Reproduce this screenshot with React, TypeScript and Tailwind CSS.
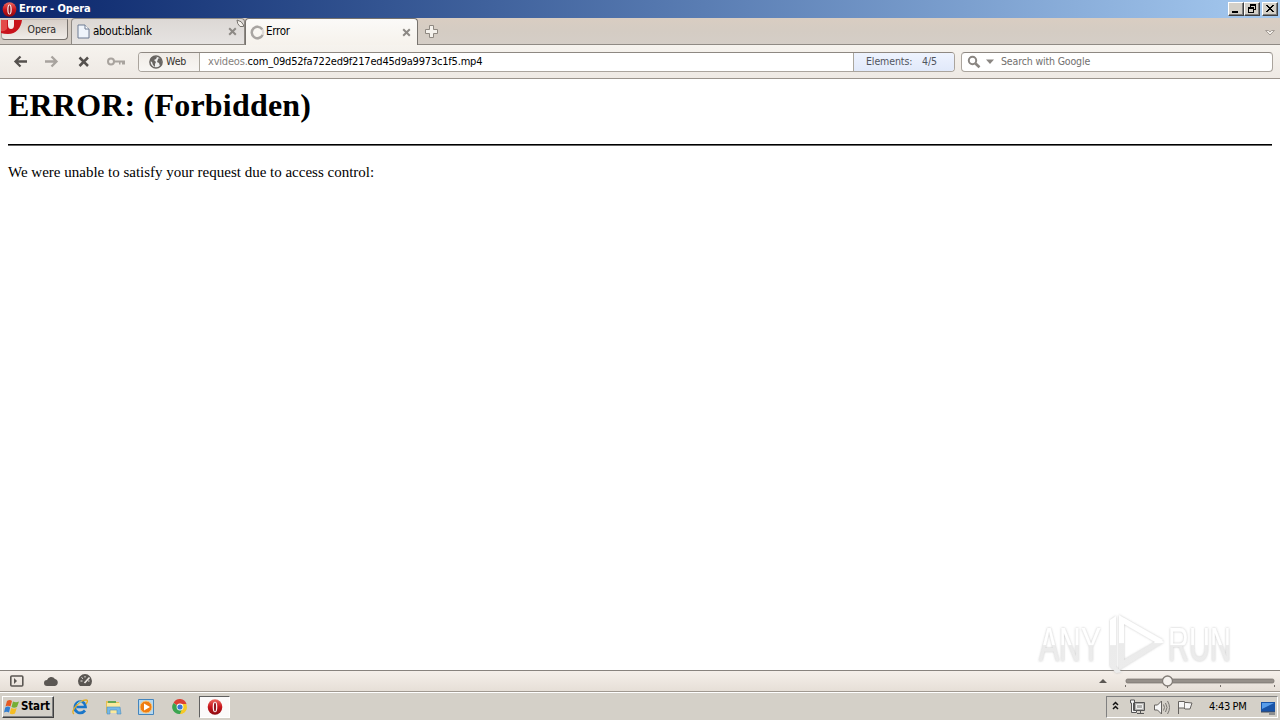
import type { ReactNode } from "react";

function OperaIcon({ size = 15 }: { size?: number }) {
  return (
    <svg width={size} height={size} viewBox="0 0 16 16" className="shrink-0">
      <defs>
        <linearGradient id="opera" x1="0" y1="0" x2="0" y2="1">
          <stop offset="0" stopColor="#ee6a60" />
          <stop offset=".5" stopColor="#c8151c" />
          <stop offset="1" stopColor="#8c0a10" />
        </linearGradient>
      </defs>
      <ellipse cx="8" cy="8" rx="7.3" ry="7.8" fill="url(#opera)" />
      <ellipse cx="8" cy="8" rx="2.3" ry="5.3" fill="#fff" />
      <ellipse cx="8" cy="8" rx="1.1" ry="4.6" fill="#8f1a20" />
    </svg>
  );
}

function WinButton({ children }: { children: ReactNode }) {
  return (
    <div className="h-[14px] w-4 border border-t-white border-l-white border-r-[#404040] border-b-[#404040] bg-[#d4d0c8] shadow-[inset_-1px_-1px_0_#808080]">
      <svg width="14" height="12" viewBox="0 0 14 12" shapeRendering="crispEdges">{children}</svg>
    </div>
  );
}

function CloseX() {
  return (
    <svg width="9" height="9" viewBox="0 0 9 9" className="shrink-0">
      <path d="M1.2 1.2l6.6 6.6M7.8 1.2L1.2 7.8" stroke="#8d8985" strokeWidth="2" />
    </svg>
  );
}

function TitleBar() {
  return (
    <div className="flex h-[18px] shrink-0 items-center bg-linear-to-r from-[#0a246a] to-[#a6caf0] pr-[2px] pl-[2px]">
      <OperaIcon />
      <span className="ml-[2px] text-[11px] font-bold tracking-[-0.1px] whitespace-nowrap text-white">Error - Opera</span>
      <div className="ml-auto flex">
        <WinButton><path d="M3 8h6v2H3z" /></WinButton>
        <WinButton><path d="M5 1h6v6H9V6h1V3H6v1H5zM3 4h6v6H3zM4 6v3h4V6z" fillRule="evenodd" /></WinButton>
        <div className="w-[2px]" />
        <WinButton><path d="M3 2h2v1h1v1h2V3h1V2h2v1h-1v1H9v1H8v1h1v1h1v1h1v1H9V8H8V7H6v1H5v1H3V8h1V7h1V6h1V5H5V4H4V3H3z" /></WinButton>
      </div>
    </div>
  );
}

function TabBar() {
  return (
    <div className="flex h-[27px] shrink-0 bg-linear-to-b from-[#d9cdc2] via-[#d4ccc3] to-[#d5cec7] shadow-[inset_0_-1px_0_#8f8a84]">
      <div className="relative mt-px ml-px flex h-[21px] w-[67px] justify-end rounded-b-[4px] border border-t-[#c5beb7] border-r-[#77726d] border-b-[#77726d] border-l-[#aaa49e] bg-linear-to-b from-[#d7cfc8] to-[#f0ece8] pr-[11px]">
        <svg width="22" height="17" viewBox="0 0 22 17" className="absolute -top-px -left-px">
          <path d="M0 1H21C20 9 15 15 7 15Q3 15 0 14Z" fill="#c8131c" />
          <path d="M0 1H6V10Q3 13 0 12Z" fill="#e34a49" />
          <path d="M7 1h6v5q0 4-3 4T7 6z" fill="#f5eeee" />
        </svg>
        <span className="text-[10.5px] leading-[19px] tracking-[-0.1px] text-[#2a2826]">Opera</span>
      </div>
      <div className="relative ml-[3px] flex h-[26px] w-[174px] items-center rounded-t-[4px] border border-b-0 border-[#8f8a84] bg-linear-to-b from-[#dcd8d5] to-[#e6e3e1] pr-[7px] pl-[5px]">
        <svg width="13" height="15" viewBox="0 0 13 15">
          <path d="M1 1h7l4 4v9H1z" fill="#eff4fb" stroke="#6d7b92" />
          <path d="M8 1v4h4" fill="#fff" stroke="#6d7b92" />
        </svg>
        <span className="ml-[3px] text-[11.5px] tracking-[-0.28px] text-black">about:blank</span>
        <span className="ml-auto"><CloseX /></span>
        <svg width="9" height="9" viewBox="0 0 9 9" className="absolute top-0 -right-[1px]">
          <path d="M1 1Q1 5 4 7.5H7.5V6Q6 2 1 1z" fill="#f5f2ed" stroke="#77736e" />
        </svg>
      </div>
      <div className="flex h-[27px] w-[173px] items-center rounded-t-[4px] border border-b-0 border-[#77736e] bg-linear-to-b from-[#fbfaf8] to-[#f6f2ec] pr-[6px] pl-[4px]">
        <svg width="15" height="15" viewBox="0 0 15 15">
          <circle cx="7.5" cy="7.5" r="5.7" fill="none" stroke="#dedad6" strokeWidth="2.4" />
          <path d="M12.6 10A5.7 5.7 0 1 1 12.2 4.3" fill="none" stroke="#a8a5a2" strokeWidth="2.4" />
        </svg>
        <span className="ml-[1px] text-[11.5px] tracking-[-0.3px] text-black">Error</span>
        <span className="ml-auto"><CloseX /></span>
      </div>
      <svg width="14" height="14" viewBox="0 0 14 14" className="mt-[7px] ml-[7px]">
        <path d="M4.5.5h4v4h4v4h-4v4h-4v-4h-4v-4h4z" fill="#f5f2ed" stroke="#8e8881" />
      </svg>
      <svg width="10" height="8" viewBox="0 0 10 8" className="mt-[11px] mr-[5px] ml-auto">
        <path d="M.5 1.5h3L5 3l1.5-1.5h3L5 6z" fill="#f1ede8" stroke="#a49d96" />
      </svg>
    </div>
  );
}

function AddressBar() {
  return (
    <div className="flex h-[34px] shrink-0 border-b border-[#9b948d] bg-linear-to-b from-[#f6f3ee] to-[#eee9e4]">
      <svg width="138" height="33" viewBox="0 0 138 33" className="shrink-0" fill="none">
        <path d="M27 16.5H16M20.5 11.5l-5 5 5 5" stroke="#55514e" strokeWidth="2.3" />
        <path d="M45 16.5h11M51.500 11.5l5 5-5 5" stroke="#a8a39e" strokeWidth="2.3" />
        <path d="M79.500 12.500l8.500 8.500M88 12.500L79.500 21" stroke="#55514e" strokeWidth="2.5" />
        <circle cx="111" cy="16.500" r="3" stroke="#a8a39e" strokeWidth="2" />
        <path d="M114 16.500h11M119 18.500h1.500M122 18.500h3" stroke="#a8a39e" strokeWidth="2" />
      </svg>
      <div className="mt-[7px] flex h-5 w-[817px] shrink-0 overflow-hidden rounded-[4px] border border-[#aaa49d] border-t-[#8e8882] bg-white">
        <div className="flex w-[61px] shrink-0 items-center border-r border-[#aaa69d] bg-linear-to-b from-[#f0ece7] to-[#f8f6f3] pl-[10px]">
          <svg width="14" height="14" viewBox="0 0 14 14">
            <circle cx="7" cy="7" r="6.1" fill="#eee" stroke="#686562" strokeWidth="1.5" />
            <path d="M2 3l3-2 3 1-1 2-2 1 2 2-1 2v3L4 10 3 7 1 6zM10 3l2 1 1 4-2 3-1-3-2-1 1-3z" fill="#686562" />
          </svg>
          <span className="ml-[3px] text-[10.5px] tracking-[-0.1px] text-[#33302d]">Web</span>
        </div>
        <div className="flex flex-1 items-center pl-[8px] text-[11px] whitespace-nowrap">
          <span className="tracking-[-0.2px] text-[#85817d]">xvideos.</span>
          <span className="tracking-[-0.2px] text-black">com_09d52fa722ed9f217ed45d9a9973c1f5.mp4</span>
        </div>
        <div className="flex w-[101px] shrink-0 items-center border-l border-[#aaa69d] bg-linear-to-b from-[#eef3fe] to-[#e1e9fa] pl-[12px] text-[10.5px] text-[#50555e]">
          <span className="w-[56px] tracking-[-0.1px]">Elements:</span>
          <span className="tracking-[-0.1px]">4/5</span>
        </div>
      </div>
      <div className="mt-[7px] ml-[6px] flex h-5 w-[312px] shrink-0 items-center rounded-[4px] border border-[#aaa49d] border-t-[#8e8882] bg-white">
        <svg width="34" height="16" viewBox="0 0 34 16" className="ml-[5px]">
          <circle cx="5.500" cy="6.500" r="3.700" fill="none" stroke="#8a8682" strokeWidth="2" />
          <path d="M8.500 9.500l4 3.800" stroke="#8a8682" strokeWidth="2.600" />
          <path d="M19 5.500h8l-4 4.500z" fill="#8a8682" />
        </svg>
        <span className="text-[10.5px] tracking-[-0.15px] whitespace-nowrap text-[#72706e]">Search with Google</span>
      </div>
    </div>
  );
}

function Watermark() {
  return (
    <svg width="200" height="68" viewBox="0 0 200 68" className="absolute right-[44px] -bottom-[6px]">
      <defs>
        <linearGradient id="fade" x1="0" y1="0" x2="0" y2="1">
          <stop offset="0" stopColor="#fff" />
          <stop offset=".5" stopColor="#fff" />
          <stop offset=".52" stopColor="#ebebeb" />
          <stop offset="1" stopColor="#ececec" />
        </linearGradient>
        <filter id="shade" x="-10%" y="-10%" width="120%" height="120%">
          <feDropShadow dx="0" dy="0" stdDeviation="1.3" floodColor="#777" floodOpacity=".45" />
        </filter>
      </defs>
      <g filter="url(#shade)" fill="url(#fade)" className="font-['Liberation_Sans_Narrow','Liberation_Sans',sans-serif] text-[48px]">
        <text x="3" y="53" textLength="62" lengthAdjust="spacingAndGlyphs">ANY</text>
        <text x="132" y="53" textLength="63" lengthAdjust="spacingAndGlyphs">RUN</text>
        <path d="M83 7L128 34 83 62zM88 16v36l31-18z" fillRule="evenodd" />
        <path d="M74 12l6-4v51l6 5-6 1-6-7zM88 10l39 22-4 3-35-20z" />
      </g>
    </svg>
  );
}

function StatusBar() {
  return (
    <div className="flex h-[22px] shrink-0 border-t border-b border-t-[#88837e] border-b-[#a09991] bg-linear-to-b from-[#f5efea] to-[#e6dfd7]">
      <svg width="100" height="20" viewBox="0 0 100 20" fill="none">
        <rect x="10.800" y="5" width="12" height="10" rx="1" stroke="#5b5753" strokeWidth="1.600" />
        <path d="M14 7l3 3-3 3z" fill="#5b5753" />
        <path d="M47 15a3 3 0 0 1 0-6 4.500 4.500 0 0 1 8-1 3.600 3.600 0 0 1 0 7z" fill="#5b5753" />
        <path d="M80 15a7 7 0 1 1 10 0z" fill="#5b5753" />
        <path d="M80.500 10h2M81.500 6.500l1.500 1.200M85 5v1.500M89.500 10h-1.500" stroke="#eee9e4" />
        <path d="M84.500 12l5-5.500" stroke="#eee9e4" strokeWidth="1.700" />
      </svg>
      <svg width="184" height="20" viewBox="0 0 184 20" className="ml-auto">
        <path d="M3 12l4-4 4 4z" fill="#5b5753" />
        <rect x="30" y="8" width="148" height="4" rx="1.500" fill="#96908a" stroke="#77716c" strokeWidth=".7" />
        <path d="M29.500 14v2M71.500 14v3M124.500 14v2M178.500 14v2" stroke="#77716c" />
        <circle cx="71.500" cy="10" r="5" fill="#f5f1ed" stroke="#827c76" strokeWidth="1.300" />
      </svg>
    </div>
  );
}

function TaskBar() {
  return (
    <div className="flex h-7 shrink-0 border-t border-white bg-[#d4d0c8] text-black">
      <div className="mt-[3px] ml-[2px] flex h-[22px] w-[52px] items-center border border-t-white border-r-[#404040] border-b-[#404040] border-l-white pl-px shadow-[inset_-1px_-1px_0_#808080]">
        <svg width="16" height="16" viewBox="0 0 16 16" className="shrink-0">
          <path d="M3 2q3-2 5 0L6.500 7.500q-3-1.500-5 0z" fill="#e65a22" />
          <path d="M9 2.500q3 1.500 6 0L13 8q-3 1.500-5.500 0z" fill="#75ae35" />
          <path d="M1.200 8.500q3-2 5 0L5 13.500q-2.500-1.500-5 0z" fill="#347fd0" />
          <path d="M7.200 9q3 1.500 5.500 0L11 14.500q-3 1.500-5.300 0z" fill="#f5bd23" />
        </svg>
        <span className="ml-[1px] text-[11.5px] font-bold tracking-[-0.15px]">Start</span>
      </div>
      <svg width="16" height="18" viewBox="0 0 16 18" className="mt-[5px] ml-[18px]" fill="none">
        <path d="M13 12.500Q10 16 6 14.500 2 12.500 3 8t6-4.500Q13 4 13.500 9H4.500" stroke="#1976c9" strokeWidth="2.700" />
        <path d="M2 16Q-1 14 4 8T14 2q3 0 0 4" stroke="#e3ad23" strokeWidth="1.300" />
        <path d="M5 6Q7 3 10 4" stroke="#7bd1f6" />
      </svg>
      <svg width="17" height="18" viewBox="0 0 17 18" className="mt-[5px] ml-[17px]">
        <path d="M1 3h5l1 1h7v11H1z" fill="#e5bf56" />
        <path d="M2 5h13v10H2z" fill="#fae99c" />
        <path d="M3 3h8v2H3z" fill="#64a754" />
        <path d="M2 9h13l1 7H12v-4H5v4H2z" fill="#76b9e8" stroke="#4d8fbd" strokeWidth=".6" />
      </svg>
      <svg width="17" height="17" viewBox="0 0 17 17" className="mt-[6px] ml-[16px]">
        <path d="M.5.5h15v15H.5z" fill="#b6d8ef" stroke="#4485bd" />
        <circle cx="8" cy="8" r="6" fill="#ef7d12" stroke="#fbc677" />
        <path d="M6 4.500l6 3.500-6 3.500z" fill="#fff" />
      </svg>
      <svg width="16" height="16" viewBox="0 0 16 16" className="mt-[6px] ml-[17px]">
        <path d="M8 8L1.500 4A7 7 0 0 1 14.500 5z" fill="#dc4134" />
        <path d="M8 8h6.800A7 7 0 0 1 7 15z" fill="#f6c927" />
        <path d="M14.200 5A7 7 0 0 1 8 15l3-7-3-3z" fill="#f6c927" />
        <path d="M1.500 4A7 7 0 0 0 8 15l2-5z" fill="#3ba550" />
        <circle cx="8" cy="8" r="3.400" fill="#fff" /><circle cx="8" cy="8" r="2.600" fill="#3977d5" />
      </svg>
      <div className="mt-[3px] ml-[11px] flex h-[22px] w-[31px] items-center justify-center border border-t-[#606060] border-r-white border-b-white border-l-[#606060] bg-[#fbfafa]">
        <OperaIcon size={16} />
      </div>
      <div className="mt-[3px] mr-[2px] ml-auto flex h-[22px] w-[172px] items-center border border-t-[#808080] border-r-white border-b-white border-l-[#808080]">
        <svg width="92" height="20" viewBox="0 0 92 20" className="shrink-0" fill="none">
          <path d="M6 8l2.500-2.500L11 8M6 12l2.500-2.500L11 12" stroke="#111" strokeWidth="1.500" />
          <g transform="translate(0 1)" stroke="#555">
            <path d="M27.500 4.500h10v8h-10z" fill="#b0b0ae" />
            <path d="M29.500 6.500h6v4h-6z" stroke="#eee" />
            <path d="M30 15.500h7M33.500 13v2M23.500 2v3h1v9.500h5v-2h-3V5h1V2z" fill="#f5f5f5" />
          </g>
          <path d="M47.500 8h3l4-4v13l-4-4h-3z" fill="#f7f7f7" stroke="#65625f" />
          <path d="M56.500 7.500q2 3 0 6M58.500 6q3 4.500 0 9M60.500 4q4 6.500 0 13" stroke="#777470" />
          <path d="M71.500 17V4.500h6v1h2.500l5 .5-2 6h-5l-1-1h-5.500" fill="#f7f7f7" stroke="#65625f" />
          <path d="M77.500 5v6" stroke="#85827e" />
        </svg>
        <span className="ml-[10px] w-[41px] text-[11px] tracking-[-0.35px] whitespace-nowrap">4:43 PM</span>
        <svg width="16" height="15" viewBox="0 0 16 15" className="ml-[10px] shrink-0">
          <path d="M1 2h14v10H1z" fill="#1853a7" /><path d="M2 3h12L2 9z" fill="#589dea" />
          <path d="M1 12h14M9 14h6" stroke="#424a56" />
        </svg>
      </div>
    </div>
  );
}

export default function App() {
  return (
    <div className="flex h-[720px] w-[1280px] flex-col overflow-hidden bg-white font-['DejaVu_Sans_Condensed','DejaVu_Sans',sans-serif]">
      <TitleBar />
      <TabBar />
      <AddressBar />
      <main className="relative flex-1 px-2 font-['Liberation_Serif',serif] text-black">
        <h1 className="pt-[8px] text-[32px] leading-[37px] font-bold tracking-[0.2px]">ERROR: (Forbidden)</h1>
        <hr className="mt-[20px] h-[2px] border-0 border-t border-black bg-[#666]" />
        <p className="mt-[17px] text-[15px] leading-[18px]">We were unable to satisfy your request due to access control:</p>
        <Watermark />
      </main>
      <StatusBar />
      <TaskBar />
    </div>
  );
}
